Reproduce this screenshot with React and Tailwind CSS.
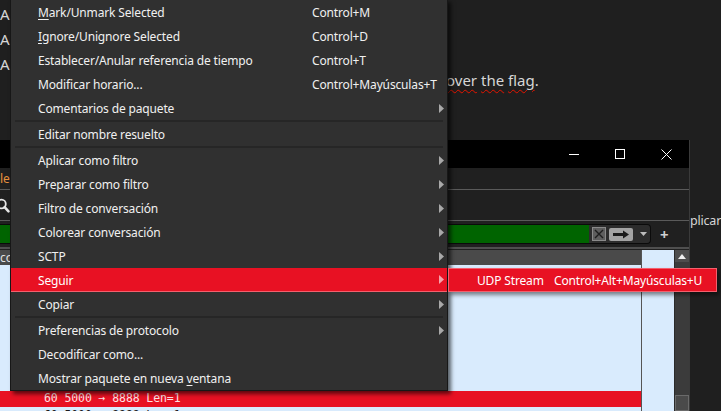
import React from "react";

const Tri = ({ active }) => (
  <svg width="5" height="9" viewBox="0 0 5 9" className="shrink-0">
    <path d="M0 0 L5 4.5 L0 9 Z" fill={active ? "#f5a3ab" : "#a9a9a9"} />
  </svg>
);

const Item = ({ children, sc, arrow, active }) => (
  <div
    className={`flex h-6 items-center pl-[27px] pr-[3px] text-[12px] tracking-[-0.15px] ${
      active ? "border-b border-[#f3606d] bg-[#e81123] text-white" : "text-[#f0f0f0]"
    }`}
  >
    <span className="w-[274px] shrink-0 whitespace-nowrap pt-[2px]">{children}</span>
    <span className="flex-1 whitespace-nowrap pt-[2px]">{sc}</span>
    {arrow && <Tri active={active} />}
  </div>
);

const Sep = () => <div className="mx-[4px] h-[2px] bg-[#262626]" />;

const ContextMenu = () => (
  <div className="absolute left-[10px] top-[-1px] w-[438px] border border-[#171717] bg-[#303030] shadow-[3px_3px_4px_rgba(0,0,0,0.6)]">
    <Item sc="Control+M">
      <span className="underline underline-offset-2">M</span>ark/Unmark Selected
    </Item>
    <Item sc="Control+D">
      <span className="underline underline-offset-2">I</span>gnore/Unignore Selected
    </Item>
    <Item sc="Control+T">Establecer/Anular referencia de tiempo</Item>
    <Item sc="Control+Mayúsculas+T">Modificar horario...</Item>
    <Item arrow>Comentarios de paquete</Item>
    <Sep />
    <Item>Editar nombre resuelto</Item>
    <Sep />
    <Item arrow>Aplicar como filtro</Item>
    <Item arrow>Preparar como filtro</Item>
    <Item arrow>Filtro de conversación</Item>
    <Item arrow>Colorear conversación</Item>
    <Item arrow>SCTP</Item>
    <Item arrow active>
      Seguir
    </Item>
    <Item arrow>Copiar</Item>
    <Sep />
    <Item arrow>Preferencias de protocolo</Item>
    <Item>Decodificar como...</Item>
    <Item>
      Mostrar paquete en nueva{" "}
      <span className="underline underline-offset-2">v</span>entana
    </Item>
  </div>
);

const SubMenu = () => (
  <div className="absolute left-[448px] top-[268px] flex h-6 w-[269px] items-center border border-[#f3606d] bg-[#e81123] pl-[28px] pt-[2px] text-[12px] tracking-[-0.15px] text-white shadow-[2px_3px_4px_rgba(0,0,0,0.45)]">
    <span className="w-[77px] shrink-0 whitespace-nowrap">UDP Stream</span>
    <span className="whitespace-nowrap">Control+Alt+Mayúsculas+U</span>
  </div>
);

const Squiggle = ({ children }) => (
  <span className="underline decoration-[#e51400] decoration-wavy decoration-1 underline-offset-[3px]">
    {children}
  </span>
);

const WireWindow = () => (
  <div className="flex h-[271px] w-[690px] shrink-0 flex-col border-r border-[#3a3a3a] bg-[#202020]">
    {/* title bar */}
    <div className="flex h-[28px] shrink-0 justify-end bg-black">
      <div className="flex w-[46px] items-center justify-center">
        <svg width="10" height="10" viewBox="0 0 10 10">
          <path d="M0 5.5 H10" stroke="#fff" strokeWidth="1" />
        </svg>
      </div>
      <div className="flex w-[46px] items-center justify-center">
        <svg width="10" height="10" viewBox="0 0 10 10">
          <rect x="0.5" y="0.5" width="9" height="9" fill="none" stroke="#fff" strokeWidth="1" />
        </svg>
      </div>
      <div className="flex w-[46px] items-center justify-center">
        <svg width="11" height="11" viewBox="0 0 11 11">
          <path d="M0.5 0.5 L10.5 10.5 M10.5 0.5 L0.5 10.5" stroke="#fff" strokeWidth="1" />
        </svg>
      </div>
    </div>
    {/* menu bar */}
    <div className="flex h-[22px] shrink-0 items-center border-b border-[#5a5a5a]">
      <span className="text-[12px] text-[#e8913d]">les</span>
    </div>
    {/* toolbar */}
    <div className="flex h-[31px] shrink-0 items-center border-b border-[#5a5a5a]">
      <svg width="16" height="16" viewBox="0 0 16 16" className="-ml-[5px] mt-[1px]">
        <circle cx="6.5" cy="6" r="4.3" fill="none" stroke="#e6e6e6" strokeWidth="1.8" />
        <path d="M9.6 9.2 L13.5 13.3" stroke="#e6e6e6" strokeWidth="2.6" strokeLinecap="round" />
      </svg>
    </div>
    <div className="h-[3px] shrink-0" />
    {/* filter bar */}
    <div className="flex h-[20px] shrink-0 items-center">
      <div className="flex h-full w-[651px] items-center rounded-r-[4px] border-y border-r border-[#0b0b0b] bg-[#2c2c2c]">
        <div className="h-full w-[589px] bg-[#006400]" />
        <div className="ml-[3px] flex h-[14px] w-[14px] items-center justify-center border border-[#8a8a8a] bg-[#5e5e5e]">
          <svg width="10" height="10" viewBox="0 0 10 10">
            <path d="M1 1 L9 9 M9 1 L1 9" stroke="#1e1e1e" strokeWidth="1.4" />
          </svg>
        </div>
        <div className="ml-[3px] flex h-[13px] w-[24px] items-center justify-center rounded-[2px] bg-[#a3a3a3]">
          <svg width="18" height="9" viewBox="0 0 18 9">
            <path d="M1 3 H11 V0.5 L17 4.5 L11 8.5 V6 H1 Z" fill="#1a1a1a" />
          </svg>
        </div>
        <svg width="7" height="4" viewBox="0 0 7 4" className="ml-[7px]">
          <path d="M0 0 H7 L3.5 4 Z" fill="#bdbdbd" />
        </svg>
      </div>
      <span className="ml-[9px] text-[15px] font-bold leading-none text-[#d0d0d0]">+</span>
    </div>
    <div className="h-[3px] shrink-0" />
    <div className="h-[2px] shrink-0 bg-[#4f4f4f]" />
    <div className="h-[1px] shrink-0" />
    {/* packet list */}
    <div className="flex min-h-0 flex-1">
      <div className="flex w-[641px] flex-col overflow-hidden">
        <div className="flex h-[15px] shrink-0 items-center bg-[#4a4a4a]">
          <span className="text-[12px] text-[#e2e2e2]">co</span>
        </div>
        <div className="flex flex-1 flex-col bg-[#d9ebfd]">
          <div className="h-[126px] shrink-0" />
          <div className="flex h-[16px] shrink-0 items-center bg-[#e81123] pl-[44px] font-['DejaVu_Sans_Mono',monospace] text-[11.5px] tracking-[-0.1px] text-[#ffe2e6]">
            60 5000 → 8888 Len=1
          </div>
          <div className="h-[16px] shrink-0 pl-[44px] pt-[1px] font-['DejaVu_Sans_Mono',monospace] text-[11.5px] leading-[14px] tracking-[-0.1px] text-[#1a1a1a]">
            60 5000 → 8888 Len=1
          </div>
        </div>
      </div>
      <div className="w-px bg-[#555]" />
      <div className="w-[32px] bg-[#d9ebfd]" />
      <div className="w-px bg-[#2a2a2a]" />
      <div className="flex w-[14px] flex-col justify-between bg-[#3b3b3b]">
        <div className="flex h-[12px] items-center justify-center bg-[#4d4d4d]">
          <svg width="8" height="5" viewBox="0 0 8 5">
            <path d="M0 5 L4 0 L8 5 Z" fill="#eeeeee" />
          </svg>
        </div>
        <div className="h-[16px] border border-[#6a6a6a] bg-[#4a4a4a]" />
      </div>
    </div>
  </div>
);

export default function App() {
  return (
    <div className="relative h-[411px] w-[721px] overflow-hidden bg-[#1f1f1f] font-['Noto_Sans',sans-serif]">
      <div className="h-[140px] text-[15px] leading-[25px] text-[#d6d6d6]">
        <div className="pt-[2px]">
          <div>Ac</div>
          <div>Ac</div>
          <div>Ac</div>
        </div>
        <div className="-mt-[9px] whitespace-nowrap pl-[446px]">
          <Squiggle>over</Squiggle> <Squiggle>the</Squiggle> <Squiggle>flag</Squiggle>.
        </div>
      </div>
      <div className="flex h-[271px]">
        <WireWindow />
        <div className="flex-1 overflow-hidden pt-[68px] text-[12.5px] leading-[25px] tracking-[-0.2px] text-[#d6d6d6]">
          <span className="whitespace-nowrap">plicar</span>
        </div>
      </div>
      <ContextMenu />
      <SubMenu />
    </div>
  );
}
